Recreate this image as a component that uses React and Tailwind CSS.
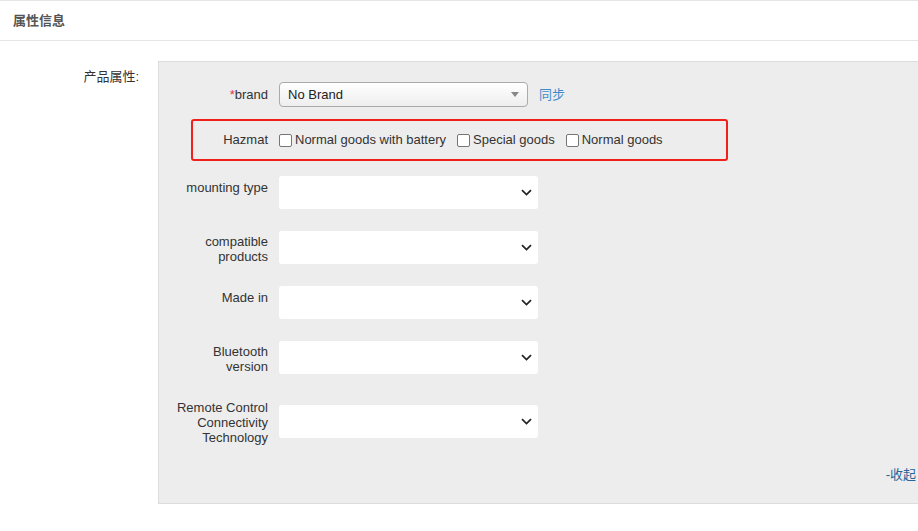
import React from "react";

const Chevron = () => (
  <svg width="11" height="7" viewBox="0 0 11 7" fill="none">
    <path d="M1 1.2 L5.5 5.6 L10 1.2" stroke="#222" strokeWidth="1.7" />
  </svg>
);

const Check = ({ label }) => (
  <div className="flex items-center">
    <span className="w-[13px] h-[13px] border border-[#767676] rounded-[2px] bg-white" />
    <span className="ml-[3px]">{label}</span>
  </div>
);

const SelectRow = ({ lines, labelPt = "pt-[4px]", selMt = "mt-0", first }) => (
  <div className={`flex items-start ${first ? "mt-[15px]" : "mt-[22px]"}`}>
    <div className={`w-[109px] text-right leading-[15px] ${labelPt}`}>
      {lines.map((l, i) => (
        <div key={i}>{l}</div>
      ))}
    </div>
    <div
      className={`ml-[11px] w-[259px] h-[33px] bg-white rounded-[3px] flex items-center justify-end pr-[6px] ${selMt}`}
    >
      <Chevron />
    </div>
  </div>
);

export default function App() {
  return (
    <div
      className="w-[918px] h-[531px] bg-white overflow-hidden text-[13px] text-[#333]"
      style={{ fontFamily: '"Liberation Sans", Arial, "Noto Sans CJK SC", sans-serif' }}
    >
      <div className="h-[41px] border-t border-b border-[#e6e6e6] flex items-center pl-[13px] font-bold text-[#555]">
        属性信息
      </div>
      <div className="flex pt-[20px]">
        <div className="w-[158px] shrink-0 text-right pr-[19px] pt-[8px] leading-[15px]">产品属性:</div>
        <div className="flex-1 bg-[#ededed] border-l border-t border-b border-[#dcdcdc] pt-[20px] pb-[21px] pr-[2px]">
          <div className="flex items-center h-[25px]">
            <div className="w-[109px] text-right pt-[1px]">
              <span className="text-[#e4393c]">*</span>brand
            </div>
            <div className="ml-[11px] w-[249px] h-[25px] rounded-[4px] border border-[#aaa] bg-gradient-to-b from-white to-[#eeeeee] flex items-center justify-between pl-[8px] pr-[8px] text-[#222]">
              <span>No Brand</span>
              <span className="w-0 h-0 border-l-[4px] border-r-[4px] border-t-[5px] border-l-transparent border-r-transparent border-t-[#888]" />
            </div>
            <span className="ml-[11px] text-[#428bca]">同步</span>
          </div>
          <div className="mt-[12px] ml-[32px] w-[537px] h-[42px] border-2 border-[#f0211a] rounded-[3px] flex items-center">
            <div className="w-[75px] text-right">Hazmat</div>
            <div className="ml-[11px] flex items-center gap-[11px]">
              <Check label="Normal goods with battery" />
              <Check label="Special goods" />
              <Check label="Normal goods" />
            </div>
          </div>
          <SelectRow first lines={["mounting type"]} />
          <SelectRow lines={["compatible", "products"]} labelPt="pt-[3px]" />
          <SelectRow lines={["Made in"]} />
          <SelectRow lines={["Bluetooth", "version"]} labelPt="pt-[3px]" />
          <SelectRow lines={["Remote Control", "Connectivity", "Technology"]} labelPt="pt-[4px]" selMt="mt-[9px]" />
          <div className="mt-[22px] text-right leading-[15px] text-[#2a6496]">-收起</div>
        </div>
      </div>
    </div>
  );
}
